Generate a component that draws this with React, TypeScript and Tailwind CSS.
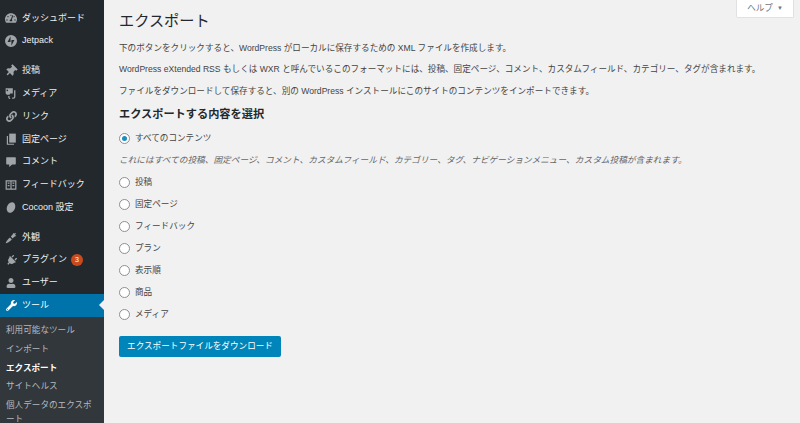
import type { ReactNode } from 'react';
import { FaLink, FaPlug, FaTachometerAlt, FaThumbtack, FaUser, FaWrench } from 'react-icons/fa';

const FONT = 'font-["Liberation_Sans","Noto_Sans_CJK_JP",sans-serif]';

function JetpackIcon() {
  return (
    <svg viewBox="0 0 20 20" className="h-[12px] w-[12px]" fill="currentColor">
      <path d="M10 0a10 10 0 1 0 0 20 10 10 0 0 0 0-20ZM9.200 11.700H4.300l4.900-9.500v9.500Zm1.500 6.100V8.300h4.900l-4.900 9.500Z" />
    </svg>
  );
}

function MediaIcon() {
  return (
    <svg viewBox="0 0 20 20" className="h-[13px] w-[13px]" fill="currentColor">
      <path d="M1 2h11v8h-4l-1 2H3l-2-2V2Zm2.500 2a1.200 1.200 0 1 0 0 2.400 1.200 1.200 0 0 0 0-2.400Z" />
      <path d="M14 5h2v10a3 3 0 0 1-3 3h-2v-2h2a1 1 0 0 0 1-1V5ZM5 14h2v2a1 1 0 0 0 1 1v1.500A3 3 0 0 1 5 16v-2Z" />
    </svg>
  );
}

function PagesIcon() {
  return (
    <svg viewBox="0 0 20 20" className="h-[12px] w-[12px]" fill="currentColor">
      <path d="M7 1h11v15H7z" />
      <path d="M3 5h2v13h10v1.500H3z" />
    </svg>
  );
}

function CommentIcon() {
  return (
    <svg viewBox="0 0 20 20" className="h-[12px] w-[12px]" fill="currentColor">
      <path d="M3 2h14a1 1 0 0 1 1 1v10a1 1 0 0 1-1 1h-5l-5 4.500V14H3a1 1 0 0 1-1-1V3a1 1 0 0 1 1-1Z" />
    </svg>
  );
}

function FeedbackIcon() {
  return (
    <svg viewBox="0 0 20 20" className="h-[12px] w-[12px]" fill="currentColor">
      <path
        fillRule="evenodd"
        d="M1 2h18v16H1V2Zm2 2v12h6V4H3Zm8 0v12h6V4h-6ZM4.500 6h3v2h-3V6Zm0 4h3v2h-3v-2ZM12.500 6h3v2h-3V6Zm0 4h3v2h-3v-2Z"
      />
    </svg>
  );
}

function BrushIcon() {
  return (
    <svg viewBox="0 0 20 20" className="h-[13px] w-[13px]" fill="currentColor">
      <path d="M1 19c0-2 3-6 6.500-9l3 3C7.500 16 3 19 1 19Z" />
      <path d="M9 8.500 12 5l1-2 1.500 1L17 2.500 15.500 6l2 1.500-2.500 1-3.500 3Z" />
    </svg>
  );
}

function CocoonIcon() {
  return <span className="block h-[11px] w-[8px] rotate-[25deg] rounded-[50%] bg-current" />;
}

type MenuEntry = {
  label: string;
  icon: ReactNode;
  gap?: boolean;
  badge?: string;
};

const MENU: MenuEntry[] = [
  { label: 'ダッシュボード', icon: <FaTachometerAlt size={12} /> },
  { label: 'Jetpack', icon: <JetpackIcon /> },
  { label: '投稿', icon: <FaThumbtack size={12} className="rotate-45" />, gap: true },
  { label: 'メディア', icon: <MediaIcon /> },
  { label: 'リンク', icon: <FaLink size={11} /> },
  { label: '固定ページ', icon: <PagesIcon /> },
  { label: 'コメント', icon: <CommentIcon /> },
  { label: 'フィードバック', icon: <FeedbackIcon /> },
  { label: 'Cocoon 設定', icon: <CocoonIcon /> },
  { label: '外観', icon: <BrushIcon />, gap: true },
  { label: 'プラグイン', icon: <FaPlug size={11} className="rotate-45" />, badge: '3' },
  { label: 'ユーザー', icon: <FaUser size={10} /> },
];

const SUBMENU = ['利用可能なツール', 'インポート', 'エクスポート', 'サイトヘルス', '個人データのエクスポート'];

const OPTIONS = ['投稿', '固定ページ', 'フィードバック', 'プラン', '表示順', '商品', 'メディア'];

function Sidebar() {
  return (
    <aside className="flex h-[423px] w-[104px] shrink-0 flex-col overflow-hidden bg-[#23282d] pt-[7px]">
      {MENU.map((item) => (
        <div
          key={item.label}
          className={`flex h-[22.700px] shrink-0 items-center text-[9px] text-[#eeeeee] ${item.gap ? 'mt-[7.500px]' : ''}`}
        >
          <span className="flex w-[21px] shrink-0 justify-center pl-[1px] text-[#a0a5aa]">{item.icon}</span>
          <span className="ml-[1px] whitespace-nowrap">{item.label}</span>
          {item.badge && (
            <span className="ml-[4px] flex h-[12px] w-[12px] items-center justify-center rounded-full bg-[#ca4a1f] text-[7px] text-white">
              {item.badge}
            </span>
          )}
        </div>
      ))}
      <div className="relative flex h-[22.500px] shrink-0 items-center bg-[#0073aa] text-[9px] text-white">
        <span className="flex w-[21px] shrink-0 justify-center pl-[1px]">
          <FaWrench size={11} />
        </span>
        <span className="ml-[1px]">ツール</span>
        <span className="absolute right-0 top-[6px] border-y-[5px] border-r-[5px] border-y-transparent border-r-[#f1f1f1]" />
      </div>
      <ul className="flex flex-col bg-[#32373c] pb-[6px] pl-[6px] pr-[6px] pt-[4px] text-[8.600px] leading-[14px] text-[#b4b9be] [line-break:loose]">
        {SUBMENU.map((label) => (
          <li key={label} className={`py-[2.400px] ${label === 'エクスポート' ? 'font-bold text-white' : ''}`}>
            {label}
          </li>
        ))}
      </ul>
    </aside>
  );
}

function Radio({ checked }: { checked?: boolean }) {
  return (
    <span className="flex h-[11px] w-[11px] shrink-0 items-center justify-center rounded-full border border-[#8c8f94] bg-white">
      {checked && <span className="h-[5px] w-[5px] rounded-full bg-[#1e8cbe]" />}
    </span>
  );
}

function Option({ label, checked }: { label: string; checked?: boolean }) {
  return (
    <label className="flex h-[22px] items-center gap-[5px] text-[8.600px] text-[#444444]">
      <Radio checked={checked} />
      {label}
    </label>
  );
}

export default function App() {
  return (
    <div className={`flex h-[423px] w-[800px] overflow-hidden bg-[#f1f1f1] ${FONT}`}>
      <Sidebar />
      <main className="relative flex-1 pl-[15px]">
        <button
          type="button"
          className="absolute right-[6px] top-0 flex h-[18px] w-[58px] items-center justify-center gap-[4px] rounded-b-[2px] border border-t-0 border-[#e1e1e1] bg-white text-[8.600px] text-[#72777c]"
        >
          ヘルプ
          <span className="text-[6px]">▼</span>
        </button>

        <h1 className="pt-[10px] text-[15.200px] leading-[22px] text-[#23282d]">エクスポート</h1>

        <div className="mt-[5.500px] flex flex-col text-[8.600px] leading-[21.500px] text-[#444444]">
          <p>下のボタンをクリックすると、WordPress がローカルに保存するための XML ファイルを作成します。</p>
          <p>WordPress eXtended RSS もしくは WXR と呼んでいるこのフォーマットには、投稿、固定ページ、コメント、カスタムフィールド、カテゴリー、タグが含まれます。</p>
          <p>ファイルをダウンロードして保存すると、別の WordPress インストールにこのサイトのコンテンツをインポートできます。</p>
        </div>

        <h2 className="mt-[4px] text-[11.200px] font-bold leading-[16px] text-[#23282d]">エクスポートする内容を選択</h2>

        <div className="mt-[5.400px] flex flex-col">
          <Option label="すべてのコンテンツ" checked />
          <p className="h-[22px] text-[8.680px] italic leading-[22px] text-[#666666]">
            これにはすべての投稿、固定ページ、コメント、カスタムフィールド、カテゴリー、タグ、ナビゲーションメニュー、カスタム投稿が含まれます。
          </p>
          {OPTIONS.map((label) => (
            <Option key={label} label={label} />
          ))}
        </div>

        <button
          type="button"
          className="mt-[10.600px] flex h-[21px] w-[162px] items-center justify-center rounded-[2px] bg-[#0085ba] text-[8.600px] text-white"
        >
          エクスポートファイルをダウンロード
        </button>
      </main>
    </div>
  );
}
